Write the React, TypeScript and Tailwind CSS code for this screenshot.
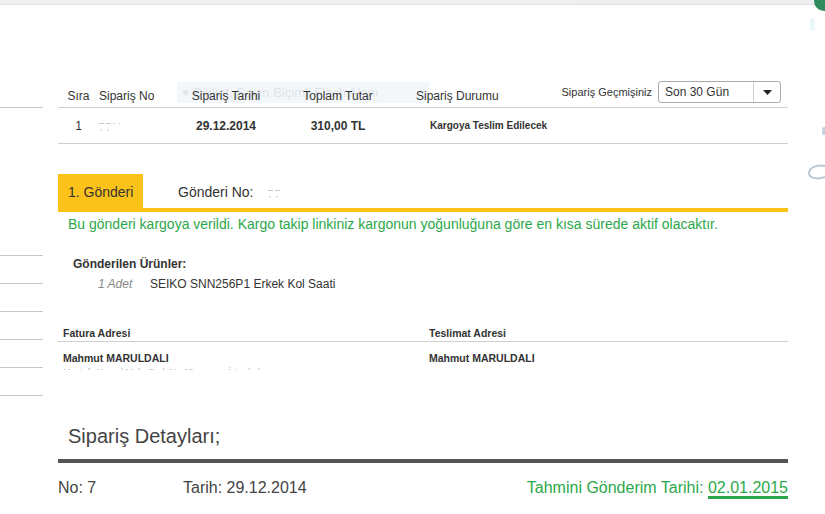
import React from "react";

const font = { fontFamily: '"Liberation Sans", Arial, sans-serif' };

function Masked({ w = 24 }: { w?: number }) {
    return (
        <svg width={w} height="10" viewBox={`0 0 ${w} 10`} className="inline-block">
            <rect x="0" y="1" width="5" height="1" fill="#c9c9c9" />
            <rect x="7" y="1" width="5" height="1" fill="#c9c9c9" />
            <rect x="14" y="1" width="2" height="1" fill="#d4d4d4" />
            <rect x="19" y="1" width="2" height="1" fill="#d4d4d4" />
            <rect x="1" y="7" width="1.5" height="1.5" fill="#cfcfcf" />
            <rect x="8" y="7" width="1.5" height="1.5" fill="#cfcfcf" />
        </svg>
    );
}

function LeftRail() {
    return (
        <div className="w-[43px] shrink-0 flex flex-col">
            <div className="mt-[102px] h-px bg-[#c8c8c8]" />
            <div className="mt-[147px] h-px bg-[#c8c8c8]" />
            <div className="mt-[27px] h-px bg-[#c8c8c8]" />
            <div className="mt-[27px] h-px bg-[#c8c8c8]" />
            <div className="mt-[27px] h-px bg-[#c8c8c8]" />
            <div className="mt-[27px] h-px bg-[#c8c8c8]" />
            <div className="mt-[27px] h-px bg-[#c8c8c8]" />
        </div>
    );
}

function OrdersTable() {
    return (
        <div className="relative mt-[76px]">
            {/* faded flash placeholder sitting behind the header */}
            <div className="absolute left-[119px] top-[1px] w-[253px] h-[21px] bg-[#f4f7fa] flex items-center pl-[6px] gap-[5px] text-[13px] text-[#e0e4e9]">
                <span className="w-[5px] h-[5px] rounded-full bg-[#e1e5ea]" />
                <span>Dikkat, Sayın Biçimli Flash Alanı</span>
            </div>

            <div className="relative grid grid-cols-[41px_82px_90px_134px_1fr] h-[27px] border-b border-[#cfcfcf] text-[12px] text-[#333]">
                <div className="flex items-end justify-center pb-[2px]">Sıra</div>
                <div className="flex items-end pb-[2px]">Sipariş No</div>
                <div className="flex items-end justify-center pb-[2px]">Sipariş Tarihi</div>
                <div className="flex items-end justify-center pb-[2px]">Toplam Tutar</div>
                <div className="flex items-start justify-between pl-[11px] pr-[7px]">
                    <span className="self-end pb-[2px]">Sipariş Durumu</span>
                    <div className="flex items-center gap-[6px]">
                        <span className="text-[11px] mt-[1px]">Sipariş Geçmişiniz</span>
                        <div className="flex h-[22px] w-[123px] border border-[#aaa] rounded-[3px] bg-white">
                            <span className="flex-1 pl-[6px] text-[12px] leading-[20px]">Son 30 Gün</span>
                            <div className="w-[27px] border-l border-[#ccc] flex items-center justify-center">
                                <svg width="9" height="5" viewBox="0 0 9 5">
                                    <path d="M0 0h9L4.5 5z" fill="#222" />
                                </svg>
                            </div>
                        </div>
                    </div>
                </div>
            </div>

            <div className="grid grid-cols-[41px_82px_90px_134px_1fr] h-[36px] items-center border-b border-[#cfcfcf] text-[12px] text-[#333]">
                <div className="text-center">1</div>
                <div className="pt-[1px]"><Masked /></div>
                <div className="text-center font-bold">29.12.2014</div>
                <div className="text-center font-bold">310,00 TL</div>
                <div className="pl-[25px] text-[10px] font-bold">Kargoya Teslim Edilecek</div>
            </div>
        </div>
    );
}

function Shipment() {
    return (
        <div className="mt-[30px]">
            <div className="flex h-[38px] border-b-4 border-[#fbc21a] text-[14px] text-[#333]">
                <div className="w-[85px] bg-[#fbc21a] pl-[10px] pt-[8px]">1. Gönderi</div>
                <div className="pl-[35px] pt-[8px] flex gap-[15px]">
                    <span>Gönderi No:</span>
                    <span className="pt-[1px]"><Masked w={14} /></span>
                </div>
            </div>
            <p className="mt-[2px] pl-[10px] text-[14px] leading-[20px] text-[#2ba84a]">
                Bu gönderi kargoya verildi. Kargo takip linkiniz kargonun yoğunluğuna göre en kısa sürede aktif olacaktır.
            </p>
            <div className="mt-[22px] pl-[15px] text-[12px] leading-[16px] font-bold text-[#333]">Gönderilen Ürünler:</div>
            <div className="mt-[4px] flex text-[12px] leading-[16px] text-[#333]">
                <span className="pl-[40px] w-[92px] italic text-[#888]">1 Adet</span>
                <span>SEIKO SNN256P1 Erkek Kol Saati</span>
            </div>

            <div className="mt-[34px] grid grid-cols-2 h-[16px] border-b border-[#cfcfcf] text-[10.5px] font-bold text-[#333]">
                <span className="pl-[5px] leading-[14px]">Fatura Adresi</span>
                <span className="pl-[6px] leading-[14px]">Teslimat Adresi</span>
            </div>
            <div className="mt-[9px] grid grid-cols-2 text-[10.5px] leading-[14px] font-bold text-[#333]">
                <span className="pl-[5px]">Mahmut MARULDALI</span>
                <span className="pl-[6px]">Mahmut MARULDALI</span>
            </div>
            <div className="h-[5px] overflow-hidden">
                <div className="pl-[5px] pt-[1px] text-[9px] leading-[12px] text-[#b8b8b8]">
                    Mustafa Kemal Mah. Cad. No 12 &nbsp;&nbsp;&nbsp;&nbsp;&nbsp;&nbsp;&nbsp;&nbsp;&nbsp;&nbsp;&nbsp;&nbsp; İstanbul
                </div>
            </div>
        </div>
    );
}

function OrderDetails() {
    return (
        <div className="mt-[52px]">
            <h2 className="pl-[10px] text-[20px] leading-[28px] text-[#444]">Sipariş Detayları;</h2>
            <div className="mt-[9px] h-[4px] bg-[#555]" />
            <div className="mt-[14px] flex items-start text-[16px] leading-[22px] text-[#444]">
                <span className="w-[125px]">No: 7</span>
                <span>Tarih: 29.12.2014</span>
                <span className="ml-auto text-[#2ba84a]">
                    Tahmini Gönderim Tarihi:{" "}
                    <span className="inline-block leading-[17px] border-b-[3px] border-[#2ba84a]">02.01.2015</span>
                </span>
            </div>
        </div>
    );
}

export default function App() {
    return (
        <div style={font} className="relative w-[825px] h-[514px] overflow-hidden bg-white">
            <div className="h-[5px] bg-gradient-to-r from-[#f1f1f1] to-[#eceef0] border-b border-[#e2e2e2]" />

            {/* decorations peeking in from the right edge */}
            <div className="absolute right-[-9px] top-[-9px] w-[20px] h-[20px] rounded-full bg-[#2f8c5c]" />
            <div className="absolute right-[10px] top-[18px] w-[5px] h-[13px] rounded-[3px] bg-[#ebf8fa]" />
            <div className="absolute right-[0px] top-[127px] w-[3px] h-[8px] rounded-l-[2px] bg-[#c3d3dd]" />
            <svg className="absolute right-0 top-[162px]" width="18" height="20" viewBox="0 0 18 20">
                <path d="M18 4 C10 2 2 6 2 11 C2 16 10 18 18 15" fill="none" stroke="#b9c8d3" strokeWidth="2" />
            </svg>

            <div className="flex">
                <LeftRail />
                <div className="ml-[15px] w-[730px]">
                    <OrdersTable />
                    <Shipment />
                    <OrderDetails />
                </div>
            </div>
        </div>
    );
}
